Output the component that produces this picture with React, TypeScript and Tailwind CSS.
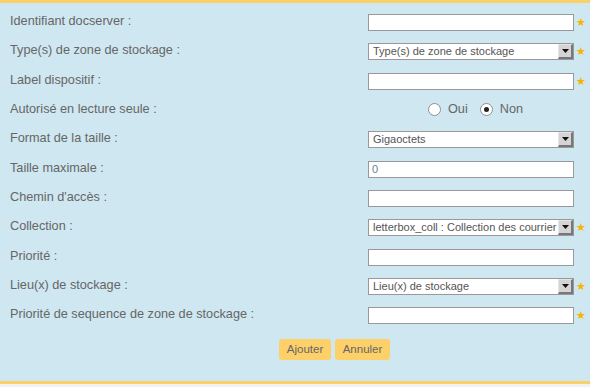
import React from 'react';

type Field = {
  label: string;
  kind: 'input' | 'select' | 'radio';
  value?: string;
  required?: boolean;
};

const fields: Field[] = [
  { label: 'Identifiant docserver :', kind: 'input', required: true },
  { label: 'Type(s) de zone de stockage :', kind: 'select', value: 'Type(s) de zone de stockage', required: true },
  { label: 'Label dispositif :', kind: 'input', required: true },
  { label: 'Autorisé en lecture seule :', kind: 'radio' },
  { label: 'Format de la taille :', kind: 'select', value: 'Gigaoctets' },
  { label: 'Taille maximale :', kind: 'input', value: '0' },
  { label: "Chemin d'accès :", kind: 'input' },
  { label: 'Collection :', kind: 'select', value: 'letterbox_coll : Collection des courrier', required: true },
  { label: 'Priorité :', kind: 'input' },
  { label: 'Lieu(x) de stockage :', kind: 'select', value: 'Lieu(x) de stockage', required: true },
  { label: 'Priorité de sequence de zone de stockage :', kind: 'input', required: true },
];

const Star = () => <span className="ml-[2px] w-[10px] text-[11px] leading-none text-[#f5b400]">★</span>;

const Radio = ({ checked }: { checked?: boolean }) => (
  <span className="flex h-[13px] w-[13px] items-center justify-center rounded-full border border-[#8f8f8f] bg-white">
    {checked && <span className="h-[5px] w-[5px] rounded-full bg-[#222]" />}
  </span>
);

const Control: React.FC<{ field: Field }> = ({ field }) => {
  if (field.kind === 'radio') {
    return (
      <div className="flex w-[206px] items-center gap-[7px] pb-[2px] pl-[60px] text-[12.7px] text-[#666]">
        <Radio />
        <span className="mr-[5px]">Oui</span>
        <Radio checked />
        <span>Non</span>
      </div>
    );
  }
  if (field.kind === 'select') {
    return (
      <div className="flex h-[17px] w-[206px] items-stretch border border-[#999] bg-white">
        <div className="flex-1 overflow-hidden whitespace-nowrap pl-[4px] text-[11px] leading-[15px] text-[#555]">
          {field.value}
        </div>
        <div className="flex w-[15px] items-center justify-center border-t border-l border-t-[#e5e5e5] border-l-[#e5e5e5] border-r-2 border-b-2 border-r-[#777] border-b-[#777] bg-[#d4d4d4]">
          <svg width="7" height="4" viewBox="0 0 7 4">
            <path d="M0 0h7L3.5 4z" fill="#111" />
          </svg>
        </div>
      </div>
    );
  }
  return (
    <div className="flex h-[17px] w-[206px] items-center border border-[#999] bg-white pl-[3px] text-[11px] text-[#6a7f99]">
      {field.value}
    </div>
  );
};

export default function App() {
  return (
    <div className="h-[387px] w-[590px] bg-[#f2f2f2] font-['Liberation_Sans',Arial,sans-serif]">
      <div className="flex h-[384px] flex-col border-y-[3px] border-[#fcd068] bg-[#cfe7f1] pt-[5px]">
        {fields.map((f) => (
          <div key={f.label} className="flex h-[29.3px] items-center">
            <div className="w-[368px] pb-[2px] pl-[10px] text-[12.7px] text-[#666]">{f.label}</div>
            <Control field={f} />
            {f.required && <Star />}
          </div>
        ))}
        <div className="mt-[9px] flex gap-[4px] pl-[279px]">
          <button className="h-[21px] w-[52px] rounded-[3px] bg-[#fdd06a] text-[11.5px] text-[#666]">Ajouter</button>
          <button className="h-[21px] w-[55px] rounded-[3px] bg-[#fdd06a] text-[11.5px] text-[#666]">Annuler</button>
        </div>
      </div>
    </div>
  );
}
